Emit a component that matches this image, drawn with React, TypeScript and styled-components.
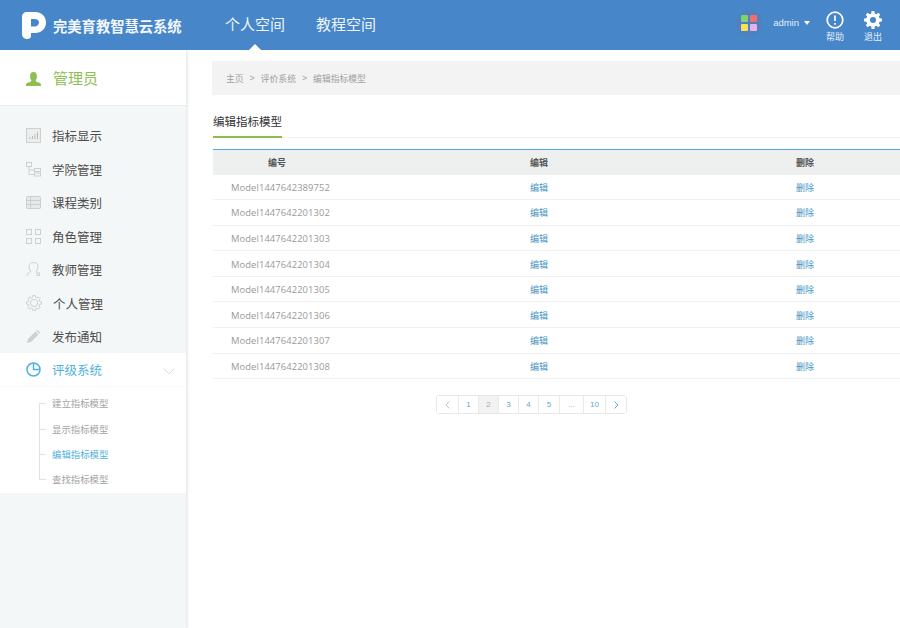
import React from "react";
import styled, { createGlobalStyle } from "styled-components";

const Global = createGlobalStyle`
  html, body { margin: 0; padding: 0; background: #fff; }
  body { font-family: "Liberation Sans", "Noto Sans CJK SC", sans-serif; }
  * { box-sizing: border-box; }
`;
const Page = styled.div`width: 900px; height: 628px; display: flex; flex-direction: column; overflow: hidden;`;
const Header = styled.header`height: 50px; flex: none; background: #4686c9; display: flex; align-items: stretch; color: #fff; position: relative; z-index: 2;`;
const Brand = styled.div`width: 225px; display: flex; align-items: center; padding: 0 0 0 22px; gap: 7px; font-size: 14.3px; font-weight: 700; color: #f2f7fc;`;
const Nav = styled.nav`display: flex; gap: 31px;`;
const NavItem = styled.a<{ $on?: boolean }>`
  position: relative; font-size: 15px; line-height: 50px; color: #eef4fb; width: 60px; white-space: nowrap;
  ${(p) => p.$on && `&::after { content: ""; position: absolute; left: 24px; bottom: 0; border: 6px solid transparent; border-top: 0; border-bottom: 6px solid #fff; }`}
`;
const Right = styled.div`margin-left: auto; display: flex; align-items: center; padding-right: 17px;`;
const Avatar = styled.div`width: 26px; height: 26px; border-radius: 50%; background: #4f80c0; display: grid; grid-template-columns: 7.5px 7.5px; grid-auto-rows: 7.5px; gap: 1.5px; align-content: center; justify-content: center; margin: -4px 11px 0 0;`;
const Dot = styled.i<{ $c: string }>`background: ${(p) => p.$c}; border-radius: 1px; display: block;`;
const User = styled.div`display: flex; align-items: center; gap: 5px; font-size: 9.5px; color: #e4eef8; margin-right: 15px; margin-top: -5px;`;
const Caret = styled.i`border: 3.5px solid transparent; border-top: 4px solid #fff; border-bottom: 0; display: block;`;
const Tool = styled.div`display: flex; flex-direction: column; align-items: center; font-size: 9px; line-height: 11px; color: #e8f0f9; width: 20px; gap: 3px; white-space: nowrap; margin-top: 3px; & + & { margin-left: 18px; }`;
const Body = styled.div`flex: 1; display: flex; min-height: 0;`;
const Side = styled.aside`width: 186px; flex: none; background: #f4f7f8; box-shadow: 1px 0 3px rgba(0,0,0,.13); position: relative;`;
const Profile = styled.div`height: 56px; background: #fff; border-bottom: 1px solid #e6eaec; display: flex; align-items: center; padding-left: 26px; gap: 12px; color: #8dbf55; font-size: 15px; margin-bottom: 12.8px;`;
const PersonWrap = styled.span`display: flex; margin-top: 3px;`;
const Menu = styled.ul`margin: 0; padding: 0; list-style: none;`;
const Item = styled.li<{ $on?: boolean }>`
  height: 33.5px; display: flex; align-items: center; padding-left: 26px; gap: 11px; font-size: 12.5px; position: relative;
  color: ${(p) => (p.$on ? "#4fb1dc" : "#4d4d4d")};
  background: ${(p) => (p.$on ? "#fff" : "transparent")};
  ${(p) => p.$on && "height: 34px; border-bottom: 1px solid #f6f8f9;"}
`;
const Chevron = styled.svg`position: absolute; right: 11px; top: 15px;`;
const Sub = styled.ul`margin: 0; padding: 4.2px 0 1.5px 52px; list-style: none; background: #fff; position: relative;
  &::before { content: ""; position: absolute; left: 39px; top: 16px; height: 76px; width: 1px; background: #e2e2e2; }`;
const SubItem = styled.li<{ $on?: boolean }>`
  height: 25.1px; line-height: 25.1px; font-size: 9.4px; color: ${(p) => (p.$on ? "#4fb1dc" : "#a3a3a3")}; position: relative;
  &::before { content: ""; position: absolute; left: -13px; top: 12px; width: 7px; height: 1px; background: #e2e2e2; }
`;
const Main = styled.main`flex: 1; padding: 11px 0 0 26px; min-width: 0;`;
const Crumbs = styled.div`height: 34px; background: #f3f3f3; display: flex; align-items: center; padding-left: 14px; font-size: 8.8px; color: #a0a0a0; gap: 6px;`;
const TitleBar = styled.div`height: 43px; margin-left: 1px; border-bottom: 1px solid #f0f0f0; display: flex; align-items: flex-end;`;
const Title = styled.div`width: 69px; height: 28px; border-bottom: 2.5px solid #8abd4e; font-size: 11.5px; color: #333; line-height: 24px; margin-bottom: -1px; white-space: nowrap;`;
const Table = styled.table`margin: 11px 0 0 1px; width: 687px; border-collapse: separate; border-spacing: 0; table-layout: fixed; font-size: 9px;`;
const Th = styled.th<{ $pad?: number }>`height: 25.5px; background: #eef0f0; border-top: 1px solid #53abdc; text-align: left; font-weight: 700; color: #555; padding: 0 0 0 ${(p) => p.$pad ?? 0}px;`;
const IdCell = styled.td`height: 25.6px; padding: 1px 0 0 18px; color: #999; font-family: "Open Sans", "Noto Sans CJK SC", sans-serif; font-size: 9.4px; letter-spacing: .1px; border-bottom: 1px solid #f0f1f1;`;
const LinkCell = styled.td`padding: 1px 0 0; color: #4694c4; border-bottom: 1px solid #f0f1f1;`;
const Pager = styled.div`display: flex; justify-content: center; margin: 16px 0 0 1px; width: 637px;`;
const PagerBox = styled.div`display: flex; height: 19px; border: 1px solid #e8e8e8; border-radius: 3px; font-size: 8px;`;
const Page_ = styled.div<{ $w: number; $on?: boolean; $muted?: boolean }>`
  width: ${(p) => p.$w}px; display: flex; align-items: center; justify-content: center;
  color: ${(p) => (p.$muted ? "#aaa" : "#5aa9da")}; background: ${(p) => (p.$on ? "#f2f2f2" : "#fff")};
  & + & { border-left: 1px solid #eaeaea; }
`;

const gearPath = (cx: number, cy: number, ro: number, ri: number, n: number) => {
  const pts: string[] = [];
  const step = (Math.PI * 2) / n;
  for (let i = 0; i < n; i++) {
    const a = i * step;
    const w = step * 0.2;
    [[ri, a - step * 0.32], [ro, a - w], [ro, a + w], [ri, a + step * 0.32]].forEach(([r, t]) => {
      pts.push(`${(cx + r * Math.cos(t)).toFixed(2)} ${(cy + r * Math.sin(t)).toFixed(2)}`);
    });
  }
  return `M${pts.join("L")}Z`;
};

const Logo = () => (
  <svg width="24" height="27" viewBox="0 0 24 27"><path fill="#fff" fillRule="evenodd" d="M5 0H13C19.500 0 24 4.500 24 10.500C24 16.500 19.500 21 13 21H9V24C9 26 7.500 27 5.500 27C2.500 27 0 25.500 0 22V5C0 2 2 0 5 0ZM9 7V14.500H13C15 14.500 17 12.500 17 10.500C17 8.500 15 7 13 7Z" /></svg>
);
const Person = ({ c = "#8dbf55" }: { c?: string }) => (
  <svg width="15" height="14" viewBox="0 0 15 14"><ellipse cx="7.500" cy="4.500" rx="3.400" ry="4.400" fill={c} /><path fill={c} d="M5.500 8h4L10 9.500l4 1.500c.6.3 1 .8 1 3H0c0-2.200.4-2.700 1-3l4-1.500z" /></svg>
);
const g = "#cfcfcf";
const icons: Record<string, React.ReactNode> = {
  chart: <svg width="15" height="15" viewBox="0 0 15 15" fill="none"><rect x=".5" y=".5" width="14" height="14" fill="#eceeee" stroke={g} /><path d="M4 11V9M6.500 11V8M9 11V6M11.500 11V4" stroke="#bbb" /></svg>,
  tree: <svg width="15" height="15" viewBox="0 0 15 15" fill="none" stroke={g}><rect x=".5" y=".5" width="5" height="4" /><rect x="8.500" y="6.500" width="6" height="3" /><rect x="8.500" y="11" width="6" height="3" /><path d="M3 5v7.500h5M3 8h5" /></svg>,
  list: <svg width="15" height="15" viewBox="0 0 15 15" fill="#e6e9ea" stroke={g}><rect x=".5" y="1.500" width="14" height="12" rx="1" /><path d="M4.500 2v11M.5 5.500h14M.5 9.500h14" /></svg>,
  grid: <svg width="15" height="15" viewBox="0 0 15 15" fill="none" stroke={g}><rect x=".5" y=".5" width="5" height="5" /><rect x="9.500" y=".5" width="5" height="5" /><rect x=".5" y="9.500" width="5" height="5" /><rect x="9.500" y="9.500" width="5" height="5" /></svg>,
  user: <svg width="15" height="15" viewBox="0 0 15 15" fill="none" stroke={g}><path d="M1 14c0-3 2-3.500 4-4.500C3.500 8 3 6 3 4.500 3 2 5 .5 7.500 .5s4.500 1.500 4.500 4c0 1.500-.5 3.500-2 5 .6.4 1.200.7 1.800 1" /><rect x="11" y="11" width="2.500" height="2.500" /></svg>,
  gear: <svg width="16" height="16" viewBox="0 0 16 16" fill="none" stroke={g}><circle cx="8" cy="8" r="3.600" /><path d={gearPath(8, 8, 7.500, 5.800, 8)} /></svg>,
  pen: <svg width="15" height="15" viewBox="0 0 15 15"><path fill={g} d="M1 14l1-4 7.500-7.500 3 3L5 13zM10.300 1.700l1-1 3 3-1 1z" /></svg>,
  clock: <svg width="15" height="15" viewBox="0 0 15 15" fill="none" stroke="#4fb1dc" strokeWidth="1.500"><circle cx="7.500" cy="7.500" r="6.500" /><path d="M7.500 1v6.500H14" /></svg>,
};
const menu = [["chart","指标显示"],["tree","学院管理"],["list","课程类别"],["grid","角色管理"],["user","教师管理"],["gear","个人管理"],["pen","发布通知"]];
const rows = ["Model1447642389752","Model1447642201302","Model1447642201303","Model1447642201304","Model1447642201305","Model1447642201306","Model1447642201307","Model1447642201308"];

export default function App() {
  return (
    <Page>
      <Global />
      <Header>
        <Brand><Logo /><span>完美育教智慧云系统</span></Brand>
        <Nav><NavItem $on>个人空间</NavItem><NavItem>教程空间</NavItem></Nav>
        <Right>
          <Avatar><Dot $c="#7dd36d" /><Dot $c="#f26d6d" /><Dot $c="#f7e257" /><Dot $c="#e3b3e6" /></Avatar>
          <User>admin <Caret /></User>
          <Tool>
            <svg width="18" height="18" viewBox="0 0 18 18" fill="none" stroke="#fff" strokeWidth="1.700"><circle cx="9" cy="9" r="7.800" /><path d="M9 4.500v5.500M9 12v1.700" /></svg>
            <span>帮助</span>
          </Tool>
          <Tool>
            <svg width="18" height="18" viewBox="0 0 18 18"><path fill="#fff" fillRule="evenodd" d={`${gearPath(9, 9, 9, 6.800, 8)}M9 6a3 3 0 1 0 0 6a3 3 0 1 0 0-6Z`} /></svg>
            <span>退出</span>
          </Tool>
        </Right>
      </Header>
      <Body>
        <Side>
          <Profile><PersonWrap><Person /></PersonWrap><span>管理员</span></Profile>
          <Menu>
            {menu.map(([i, t]) => <Item key={t}>{icons[i]}<span>{t}</span></Item>)}
            <Item $on>{icons.clock}<span>评级系统</span>
              <Chevron width="12" height="7" viewBox="0 0 12 7" fill="none" stroke="#d5d9db"><path d="M.5.500 6 6l5.500-5.500" /></Chevron>
            </Item>
          </Menu>
          <Sub>
            <SubItem>建立指标模型</SubItem><SubItem>显示指标模型</SubItem><SubItem $on>编辑指标模型</SubItem><SubItem>查找指标模型</SubItem>
          </Sub>
        </Side>
        <Main>
          <Crumbs><span>主页</span><span>&gt;</span><span>评价系统</span><span>&gt;</span><span>编辑指标模型</span></Crumbs>
          <TitleBar><Title>编辑指标模型</Title></TitleBar>
          <Table>
            <colgroup><col width="317" /><col width="266" /><col /></colgroup>
            <thead><tr><Th $pad={55}>编号</Th><Th>编辑</Th><Th>删除</Th></tr></thead>
            <tbody>{rows.map((r) => <tr key={r}><IdCell>{r}</IdCell><LinkCell>编辑</LinkCell><LinkCell>删除</LinkCell></tr>)}</tbody>
          </Table>
          <Pager>
            <PagerBox>
              <Page_ $w={21} $muted>
                <svg width="6" height="8" viewBox="0 0 6 8" fill="none" stroke="#c4c4c4"><path d="M4.500.500 1 4l3.500 3.500" /></svg>
              </Page_>
              <Page_ $w={20}>1</Page_><Page_ $w={20} $on $muted>2</Page_><Page_ $w={20}>3</Page_><Page_ $w={20}>4</Page_><Page_ $w={21}>5</Page_>
              <Page_ $w={24} $muted>...</Page_><Page_ $w={22}>10</Page_>
              <Page_ $w={21}>
                <svg width="6" height="8" viewBox="0 0 6 8" fill="none" stroke="#5aa9da"><path d="M1.500.500 5 4 1.500 7.500" /></svg>
              </Page_>
            </PagerBox>
          </Pager>
        </Main>
      </Body>
    </Page>
  );
}
